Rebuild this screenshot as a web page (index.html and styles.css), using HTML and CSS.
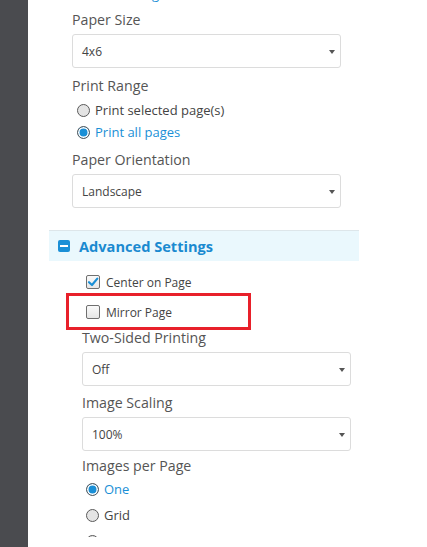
FILE: index.html
```html
<!DOCTYPE html>
<html>
<head>
<meta charset="utf-8">
<link rel="stylesheet" href="styles.css">
</head>
<body>
<div class="app">
  <div class="sidebar"></div>
  <div class="panel">
    <div class="scrollbar"></div>
    <div class="basic">
      <div class="top-link">Printer Settings</div>
      <div class="label m7">Paper Size</div>
      <div class="select"><span>4x6</span><i class="caret"></i></div>
      <div class="label m8">Print Range</div>
      <div class="radios">
        <div class="radio-row"><span class="radio"></span><span>Print selected page(s)</span></div>
        <div class="radio-row on"><span class="radio"></span><span>Print all pages</span></div>
      </div>
      <div class="label m7">Paper Orientation</div>
      <div class="select"><span>Landscape</span><i class="caret"></i></div>
    </div>
    <div class="adv-header">
      <span class="minus"></span>
      <span>Advanced Settings</span>
    </div>
    <div class="advanced">
      <div class="checks">
        <div class="check-row"><span class="checkbox checked"><svg viewBox="0 0 14 14" width="14" height="14"><path d="M3 7.2 L6 10 L11.3 3.6" fill="none" stroke="#1a8fd6" stroke-width="2.2" stroke-linecap="round" stroke-linejoin="round"/></svg></span><span>Center on Page</span></div>
        <div class="check-row mirror"><span class="checkbox"></span><span>Mirror Page</span><span class="highlight"></span></div>
      </div>
      <div class="label m1">Two-Sided Printing</div>
      <div class="select"><span>Off</span><i class="caret"></i></div>
      <div class="label m7">Image Scaling</div>
      <div class="select"><span>100%</span><i class="caret"></i></div>
      <div class="label m5">Images per Page</div>
      <div class="radios big">
        <div class="radio-row on"><span class="radio"></span><span>One</span></div>
        <div class="radio-row"><span class="radio"></span><span>Grid</span></div>
        <div class="radio-row"><span class="radio"></span><span>Custom</span></div>
      </div>
    </div>
  </div>
</div>
</body>
</html>
```

FILE: styles.css
```css
html, body {
  margin: 0;
  padding: 0;
  background: #fff;
  overflow: hidden;
  height: 547px;
}
body {
  font-family: "Open Sans", "Liberation Sans", sans-serif;
  color: #555;
}
.app {
  display: flex;
  align-items: flex-start;
  height: 547px;
  overflow: hidden;
}
.sidebar {
  width: 28px;
  height: 547px;
  flex: none;
  background: #4a4b4f;
}
.panel {
  position: relative;
  flex: none;
  width: 310px;
  height: 537px;
  overflow: hidden;
  padding-left: 21px;
}
.scrollbar {
  position: absolute;
  left: 333px;
  top: 0;
  width: 7px;
  height: 363px;
  background: #575757;
  border-radius: 0 0 4px 4px;
}
.basic,
.advanced {
  display: flex;
  flex-direction: column;
  width: 269px;
}
.basic > *,
.advanced > * {
  flex-shrink: 0;
}
.basic {
  padding-left: 23px;
  padding-top: 15px;
}
.advanced {
  padding-left: 33px;
}
.top-link {
  margin-top: -15px;
  font-size: 13px;
  line-height: 18px;
  height: 18px;
  color: #1a8fd6;
  margin-top: -15px;
  position: relative;
  top: -15px;
  margin-bottom: -15px;
}
.label {
  font-size: 14.2px;
  line-height: 20px;
  height: 20px;
  color: #555;
}
.m1 { margin-top: 1px; }
.m5 { margin-top: 5px; }
.m7 { margin-top: 7px; }
.m8 { margin-top: 8px; }
.select {
  box-sizing: border-box;
  height: 34px;
  margin-top: 4px;
  border: 1px solid #dcdcdc;
  border-radius: 3px;
  display: flex;
  align-items: center;
  justify-content: space-between;
  padding: 0 5px 0 9px;
  font-size: 12px;
  color: #444;
}
.caret {
  width: 0;
  height: 0;
  border-left: 3.5px solid transparent;
  border-right: 3.5px solid transparent;
  border-top: 4px solid #555;
  margin-top: 1px;
}
.radios {
  margin-top: 3px;
}
.radio-row {
  display: flex;
  align-items: center;
  height: 22px;
  padding-left: 5px;
  gap: 5px;
  font-size: 13px;
  color: #444;
}
.radios.big {
  margin-top: 0;
}
.radios.big .radio-row {
  height: 26px;
  padding-left: 4px;
}
.radio {
  box-sizing: border-box;
  width: 13px;
  height: 13px;
  border-radius: 50%;
  border: 1.5px solid #5a5a5a;
  background: #e4e4e4;
  flex: none;
}
.radio-row.on {
  color: #1a8fd6;
}
.radio-row.on .radio {
  background: #1a8fd6;
  box-shadow: inset 0 0 0 1.5px #fff;
}
.adv-header {
  margin-top: 22px;
  box-sizing: border-box;
  height: 31px;
  border-top: 1px solid #dde6ea;
  background: #eaf8fd;
  display: flex;
  align-items: center;
  padding-left: 9px;
  gap: 9px;
  font-size: 14.6px;
  font-weight: bold;
  color: #1a8ad0;
}
.minus {
  position: relative;
  width: 12px;
  height: 12px;
  border-radius: 2px;
  background: #1a8fd6;
  flex: none;
}
.minus::after {
  content: "";
  position: absolute;
  left: 2px;
  right: 2px;
  top: 5px;
  height: 2px;
  background: #fff;
}
.checks {
  margin-top: 6px;
}
.check-row {
  position: relative;
  display: flex;
  align-items: center;
  height: 30px;
  padding-left: 4px;
  gap: 6px;
  font-size: 12px;
  color: #444;
}
.checkbox {
  box-sizing: border-box;
  width: 14px;
  height: 14px;
  border: 1px solid #6f6f6f;
  border-radius: 2px;
  background: linear-gradient(#fafafa, #e6e6e6);
  flex: none;
  display: flex;
}
.checkbox svg {
  margin: -1px;
}
.highlight {
  position: absolute;
  left: -16px;
  top: -4px;
  width: 185px;
  height: 37px;
  box-sizing: border-box;
  border: 3px solid #e8202a;
}
```
